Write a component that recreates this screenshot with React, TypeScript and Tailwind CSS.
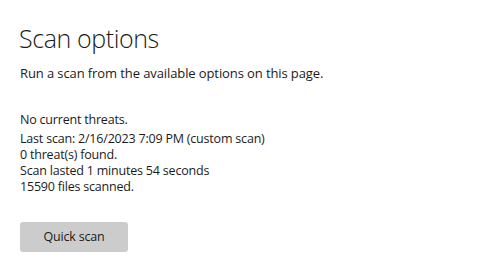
export default function App() {
  const details = [
    "Last scan: 2/16/2023 7:09 PM (custom scan)",
    "0 threat(s) found.",
    "Scan lasted 1 minutes 54 seconds",
    "15590 files scanned.",
  ];

  return (
    <div className="h-[276px] w-[500px] bg-white pl-5 pt-[21px] text-[#1b1b1b] font-['Open_Sans',sans-serif]">
      <h1 className="text-[25px] font-light leading-[34px] tracking-[-0.4px] -ml-px">Scan options</h1>
      <p className="mt-[9px] text-[13px] leading-[18px] tracking-[-0.1px]">
        Run a scan from the available options on this page.
      </p>

      <div className="mt-[29px] text-[12.5px] tracking-[-0.2px]">
        <p className="leading-[17px]">No current threats.</p>
        <div className="mt-[3px] leading-[16px]">
          {details.map((line) => (
            <p key={line}>{line}</p>
          ))}
        </div>
      </div>

      <button className="mt-[27px] flex h-[30px] w-[108px] items-center justify-center rounded-[3px] bg-[#cccccc] text-[12.5px] tracking-[-0.2px] text-[#1b1b1b]">
        Quick scan
      </button>
    </div>
  );
}
